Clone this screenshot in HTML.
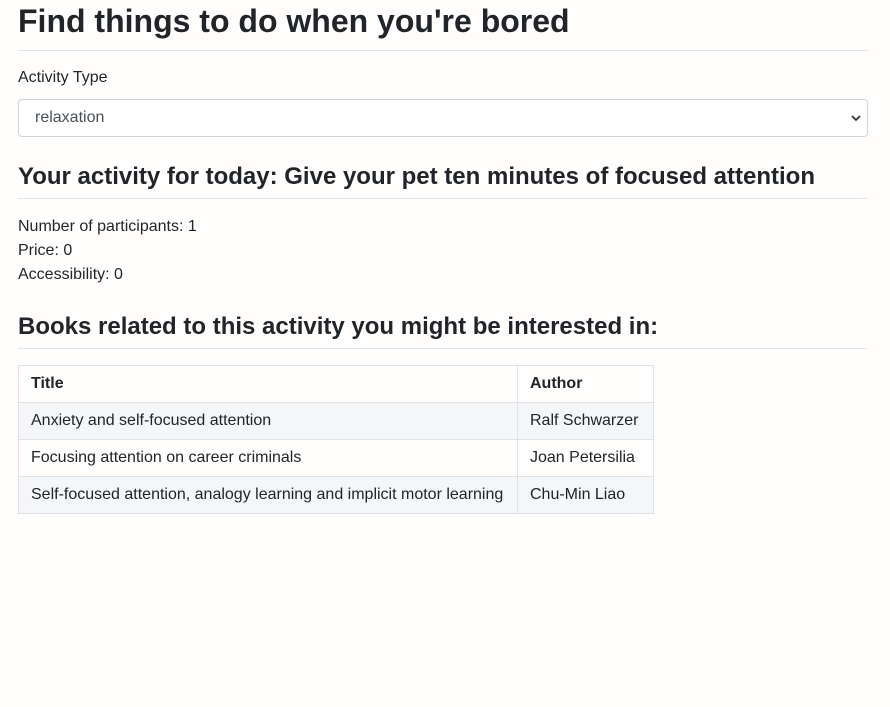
<!DOCTYPE html>
<html><head><meta charset="utf-8"><style>
body{margin:0;background:#fffefd;font-family:"Liberation Sans",sans-serif;color:#212529;width:890px;height:707px;overflow:hidden;position:relative}
.a{position:absolute;left:18px}
h1{position:absolute;left:18px;top:2px;margin:0;font-size:32px;font-weight:bold;line-height:38px}
h2{position:absolute;left:18px;margin:0;font-size:24px;font-weight:bold;line-height:28px}
.hr{position:absolute;left:18px;width:850px;height:1px;background:#e3e4e5}
.t{font-size:16px;line-height:24px}
.sel{position:absolute;left:18px;top:99px;width:848px;height:36px;border:1px solid #ced4da;border-radius:4px;background:#fff}
.sel span{position:absolute;left:16px;top:6px;color:#495057}
.sel svg{position:absolute;right:6px;top:13px}
table{position:absolute;left:18px;top:365px;border-collapse:collapse;font-size:16px;table-layout:fixed;width:635px}
td,th{border:1px solid #dee2e6;padding:0 12px;height:36px;text-align:left;white-space:nowrap;overflow:hidden}
tr.s td{background:#f4f6f7}
</style></head><body>
<h1>Find things to do when you're bored</h1>
<div class="hr" style="top:50px"></div>
<div class="a t" style="top:66px">Activity Type</div>
<div class="sel t"><span>relaxation</span><svg width="10" height="10" viewBox="0 0 10 10"><path d="M1 3l4 4 4-4" stroke="#333" stroke-width="1.8" fill="none"/></svg></div>
<h2 style="top:163px">Your activity for today: Give your pet ten minutes of focused attention</h2>
<div class="hr" style="top:198px"></div>
<div class="a t" style="top:215px">Number of participants: 1<br>Price: 0<br>Accessibility: 0</div>
<h2 style="top:313px">Books related to this activity you might be interested in:</h2>
<div class="hr" style="top:348px"></div>
<table>
<colgroup><col style="width:499px"><col style="width:136px"></colgroup>
<tr><th>Title</th><th>Author</th></tr>
<tr class="s"><td>Anxiety and self-focused attention</td><td>Ralf Schwarzer</td></tr>
<tr><td>Focusing attention on career criminals</td><td>Joan Petersilia</td></tr>
<tr class="s"><td>Self-focused attention, analogy learning and implicit motor learning</td><td>Chu-Min Liao</td></tr>
</table>
</body></html>
